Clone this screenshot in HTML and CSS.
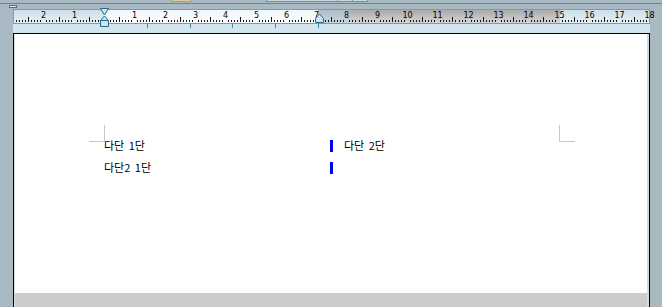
FILE: index.html
```html
<!DOCTYPE html>
<html>
<head>
  <meta charset="utf-8">
  <link rel="stylesheet" href="styles.css">
</head>
<body>
  <div class="toolbar-edge">
    <span class="tool tool-beige"></span>
    <span class="tool tool-wide"></span>
    <span class="tool tool-small"></span>
    <span class="tool tool-small"></span>
  </div>
  <div class="toolbar-line"></div>
  <div class="strip">
    <span class="ruler-toggle"></span>
  </div>

  <div class="ruler-row">
    <svg id="ruler" class="ruler" width="637" height="24" viewBox="0 0 637 24"></svg>
  </div>

  <div class="page">
    <div class="sheet">
      <div class="body">
        <div class="col col-first">
          <p class="line">다단 1단</p>
          <p class="line">다단2 1단</p>
        </div>
        <div class="col col-second">
          <p class="line"><span class="mark"></span>다단 2단</p>
          <p class="line"><span class="mark"></span></p>
        </div>
      </div>
    </div>
    <div class="sheet-gap"></div>
  </div>

  <script>
    // Build the ruler: bands, ticks, numbers, tab stops and indent markers
    document.addEventListener('DOMContentLoaded', function() {
      var svg = document.getElementById('ruler');
      var ns = 'http://www.w3.org/2000/svg';
      var origin = 91;
      var cm = 30.3;

      function add(tag, attrs, text) {
        var el = document.createElementNS(ns, tag);
        for (var k in attrs) el.setAttribute(k, attrs[k]);
        if (text) el.textContent = text;
        svg.appendChild(el);
        return el;
      }

      // Gradients for the ruler bands
      var defs = add('defs', {});
      var grads = [
        { id: 'g-margin', top: '#c9dde8', bottom: '#e6f0f5' },
        { id: 'g-text', top: '#eef5f9', bottom: '#ffffff' },
        { id: 'g-gap', top: '#a9bcc8', bottom: '#c7d6de' },
        { id: 'g-other', top: '#a6a6a6', bottom: '#d6d6d6' }
      ];
      grads.forEach(function(g) {
        var lg = document.createElementNS(ns, 'linearGradient');
        lg.setAttribute('id', g.id);
        lg.setAttribute('x1', 0); lg.setAttribute('y1', 0);
        lg.setAttribute('x2', 0); lg.setAttribute('y2', 1);
        var s1 = document.createElementNS(ns, 'stop');
        s1.setAttribute('offset', '0'); s1.setAttribute('stop-color', g.top);
        var s2 = document.createElementNS(ns, 'stop');
        s2.setAttribute('offset', '1'); s2.setAttribute('stop-color', g.bottom);
        lg.appendChild(s1); lg.appendChild(s2);
        defs.appendChild(lg);
      });

      var bands = [
        { x: 0, w: 91, fill: 'url(#g-margin)' },
        { x: 91, w: 214, fill: 'url(#g-text)' },
        { x: 305, w: 32, fill: 'url(#g-gap)' },
        { x: 337, w: 210, fill: 'url(#g-other)' },
        { x: 547, w: 90, fill: 'url(#g-margin)' }
      ];
      bands.forEach(function(b) {
        add('rect', { x: b.x, y: 0, width: b.w, height: 14, fill: b.fill });
      });
      add('rect', { x: 0.5, y: 0.5, width: 636, height: 14, fill: 'none', stroke: '#7c9cab' });

      // Millimetre ticks and centimetre numbers
      for (var i = -29; i <= 180; i++) {
        var x = Math.round(origin + i * cm / 10);
        if (i === 0) continue;
        if (i % 10 === 0) {
          add('text', { x: x + 0.5, y: 9, 'class': 'num', 'text-anchor': 'middle' }, String(Math.abs(i / 10)));
        } else if (i % 5 === 0) {
          add('rect', { x: x, y: 8, width: 1, height: 5, fill: '#111' });
        } else {
          add('rect', { x: x, y: 11, width: 1, height: 2, fill: '#111' });
        }
      }

      // Tab stops below the ruler
      [134, 177, 219, 262, 305].forEach(function(x) {
        add('rect', { x: x, y: 14, width: 1, height: 5, fill: '#3b8db4' });
      });

      // Left indent marker (hourglass) and right indent marker
      var mark = { fill: '#cbe6f2', stroke: '#2b6a85', 'stroke-width': 1 };
      add('polygon', Object.assign({ points: '87.5,-0.5 95.5,-0.5 91.5,6' }, mark));
      add('polygon', Object.assign({ points: '91.5,7 95.5,11.5 95.5,17.5 87.5,17.5 87.5,11.5' }, mark));
      add('line', { x1: 87.5, y1: 11.5, x2: 95.5, y2: 11.5, stroke: '#2b6a85' });
      add('polygon', Object.assign({ points: '306.5,5 310.5,9.5 310.5,13.5 302.5,13.5 302.5,9.5' }, mark));
    });
  </script>
</body>
</html>
```

FILE: styles.css
```css
body {
  margin: 0;
  padding: 0;
  width: 662px;
  height: 307px;
  overflow: hidden;
  background-color: #a8b9c3;
  font-family: "Noto Sans CJK KR", "Noto Sans", sans-serif;
}

.toolbar-edge {
  display: flex;
  height: 3px;
}

.tool {
  display: block;
  height: 2px;
  box-sizing: border-box;
}

.tool-beige {
  width: 21px;
  margin-left: 171px;
  background-color: #dccb9d;
  border: 1px solid #a99b74;
  border-top: none;
  border-radius: 0 0 5px 5px;
}

.tool-wide {
  width: 72px;
  margin-left: 74px;
  background-color: #c9d7df;
  border: 1px solid #7593a3;
  border-top: none;
}

.tool-small {
  width: 15px;
  background-color: #c9d7df;
  border: 1px solid #7593a3;
  border-top: none;
  border-left: none;
}

.toolbar-line {
  height: 1px;
  background-color: #5e8a9c;
}

.strip {
  height: 4px;
}

.ruler-toggle {
  display: block;
  width: 8px;
  height: 3px;
  margin-left: 9px;
  margin-top: 1px;
  box-sizing: border-box;
  background-color: #dfeaf0;
  border: 1px solid #4f7282;
}

.ruler-row {
  margin-left: 13px;
  width: 637px;
  height: 24px;
  background-color: #d2e4ee;
}

.ruler {
  display: block;
  overflow: visible;
}

.ruler .num {
  font-family: "DejaVu Sans", sans-serif;
  font-size: 8px;
  fill: #000;
}

.page {
  margin-left: 13px;
  width: 637px;
  box-sizing: border-box;
  border: 1px solid #000;
  border-bottom: none;
  padding: 0 2px 0 1px;
  background-color: #d9d9d9;
}

.sheet {
  height: 259px;
  background-color: #fff;
  overflow: hidden;
}

.sheet-gap {
  height: 20px;
  background-color: #cccccc;
}

.body {
  position: relative;
  display: flex;
  width: 455px;
  margin-left: 89px;
  margin-top: 101px;
}

.body::before,
.body::after {
  content: "";
  position: absolute;
  top: -10px;
  width: 15px;
  height: 16px;
  border-bottom: 1px solid #c8c8c8;
}

.body::before {
  left: -15px;
  border-right: 1px solid #c8c8c8;
}

.body::after {
  left: 455px;
  border-left: 1px solid #c8c8c8;
}

.col-first {
  width: 226px;
}

.col-second {
  flex: 1;
}

.line {
  display: flex;
  align-items: center;
  box-sizing: border-box;
  height: 22px;
  padding-bottom: 3px;
  margin: 0;
  font-size: 11px;
  word-spacing: 2px;
  color: #000;
  white-space: pre;
}

.mark {
  display: block;
  width: 3px;
  height: 12px;
  margin-top: 3px;
  margin-right: 11px;
  background-color: #0000ff;
}
```
